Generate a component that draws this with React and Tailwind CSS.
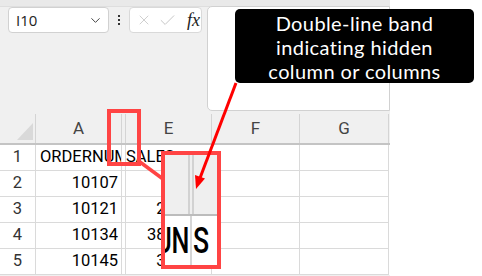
import React from 'react';
import { X, Check, ChevronDown } from 'lucide-react';

const cellFont = { fontFamily: 'Roboto, "Liberation Sans", sans-serif' };

const rows = [
  { n: 1, a: 'ORDERNUMBER', e: 'SALES', head: true },
  { n: 2, a: '10107', e: '2871' },
  { n: 3, a: '10121', e: '2765.9' },
  { n: 4, a: '10134', e: '3884.34' },
  { n: 5, a: '10145', e: '3746.7' },
];

const NameBox = () => (
  <div className="flex h-[26px] w-[101px] items-center justify-between rounded-[4px] border border-[#d1d1d1] bg-white pl-[7px] pr-[5px]">
    <span className="text-[15px] text-[#222]" style={{ fontFamily: '"Open Sans", sans-serif' }}>I10</span>
    <ChevronDown size={15} strokeWidth={1.6} className="text-[#444]" />
  </div>
);

const FormulaButtons = () => (
  <div className="flex h-[26px] w-[73px] items-center rounded-[4px] border border-[#d9d9d9] bg-white pl-[6px]">
    <X size={16} strokeWidth={1.2} className="text-[#c4c4c4]" />
    <Check size={19} strokeWidth={1.2} className="ml-[6px] text-[#c4c4c4]" />
    <span className="ml-[10px] text-[18px] italic text-[#222]" style={{ fontFamily: '"Liberation Serif", serif' }}>fx</span>
  </div>
);

const HeaderRow = () => (
  <div className="grid h-[31px] grid-cols-[36px_86px_4px_86px_88px_89px] border-b-2 border-[#c4c4c4] bg-[#f0f0f0] text-[17px] text-[#444]" style={cellFont}>
    <div className="relative border-r border-[#d4d4d4]">
      <svg className="absolute left-[17px] top-[9px]" width="16" height="17" viewBox="0 0 16 17">
        <polygon points="16,0 16,17 0,17" fill="#d9d9d9" />
      </svg>
    </div>
    <div className="flex items-center justify-center border-r border-[#d4d4d4]">A</div>
    <div className="border-r border-[#d4d4d4]" />
    <div className="flex items-center justify-center border-r border-[#d4d4d4]">E</div>
    <div className="flex items-center justify-center border-r border-[#d4d4d4]">F</div>
    <div className="flex items-center justify-center border-r border-[#d4d4d4]">G</div>
  </div>
);

const DataRow = ({ row }) => (
  <div className="grid h-[26px] grid-cols-[36px_86px_4px_86px_88px_89px] bg-white text-[16.5px] text-black" style={cellFont}>
    <div className="flex items-center justify-center border-b border-r border-[#dadada] text-[#333]">{row.n}</div>
    <div className={`flex items-center overflow-hidden whitespace-nowrap border-b border-r border-[#dadada] ${row.head ? 'justify-start pl-[4px]' : 'justify-end pr-[3px]'}`}>
      {row.a}
    </div>
    <div className="border-b border-r border-[#dadada]" />
    <div className={`flex items-center overflow-hidden whitespace-nowrap border-b border-r border-[#dadada] ${row.head ? 'justify-start pl-0' : 'justify-end pr-[4px]'}`}>
      {row.e}
    </div>
    <div className="border-b border-r border-[#dadada]" />
    <div className="border-b border-r border-[#dadada]" />
  </div>
);

// magnified view of the hidden-column band
const Inset = () => (
  <div className="absolute left-[165px] top-[155px] flex h-[110px] w-[52px] flex-col overflow-hidden bg-white">
    <div className="relative h-[61px] border-b-2 border-[#bcbcbc] bg-[#efefef]">
      <div className="absolute left-[23px] top-0 h-full w-[2px] bg-[#d2d2d2]" />
      <div className="absolute left-[27px] top-0 h-full w-[2px] bg-[#d2d2d2]" />
    </div>
    <div className="relative flex-1">
      <div className="absolute left-[25px] top-0 h-full w-[2px] bg-[#d6d6d6]" />
      <div className="absolute left-0 top-[2px] h-[46px] w-[24px] overflow-hidden">
        <span className="absolute right-0 top-0 origin-right scale-x-[0.68] whitespace-nowrap text-[37px] font-medium leading-[46px] text-black" style={cellFont}>
          UN
        </span>
      </div>
      <span className="absolute left-[28px] top-[2px] origin-left scale-x-[0.72] text-[37px] font-medium leading-[46px] text-black" style={cellFont}>
        S
      </span>
    </div>
  </div>
);

const Annotations = () => (
  <svg className="pointer-events-none absolute left-0 top-0" width="482" height="276" viewBox="0 0 482 276">
    <rect x="109" y="111" width="30" height="53" fill="none" stroke="#ff4444" strokeWidth="4" />
    <line x1="140" y1="162" x2="163" y2="179" stroke="#ff4444" strokeWidth="3.5" />
    <rect x="163" y="153" width="56" height="114" fill="none" stroke="#ff4444" strokeWidth="4" />
    <line x1="236" y1="83" x2="200" y2="178" stroke="#ff0000" strokeWidth="3" />
    <polygon points="196,189 205,178.5 195,175" fill="#ff0000" />
  </svg>
);

export default function App() {
  return (
    <div className="relative flex h-[276px] w-[482px] overflow-hidden bg-white">
      <div className="flex w-[390px] flex-col bg-[#f0f0f0]">
        <div className="h-[7px] border-b border-[#dedede] bg-[#e9e9e9]" />
        <div className="flex h-[107px] items-start pl-[8px]">
          <NameBox />
          <div className="ml-[9px] mt-[8px] flex flex-col gap-[2px]">
            <span className="h-[2px] w-[2px] bg-[#333]" />
            <span className="h-[2px] w-[2px] bg-[#333]" />
            <span className="h-[2px] w-[2px] bg-[#333]" />
          </div>
          <div className="ml-[9px]">
            <FormulaButtons />
          </div>
          <div className="ml-[5px] h-[105px] flex-1 -translate-y-[1px] rounded-l-[5px] border border-[#d1d1d1] bg-white" />
        </div>
        <HeaderRow />
        {rows.map((r) => (
          <DataRow key={r.n} row={r} />
        ))}
      </div>
      <div className="flex-1 bg-white" />

      <div
        className="absolute left-[235px] top-[9px] flex h-[74px] w-[239px] flex-col items-center justify-center rounded-[5px] bg-black pt-[2px] text-[20px] leading-[24px] tracking-[0.4px] text-white"
        style={{ fontFamily: 'Lato, "Open Sans", sans-serif' }}
      >
        <span>Double-line band</span>
        <span>indicating hidden</span>
        <span>column or columns</span>
      </div>

      <Inset />
      <Annotations />
    </div>
  );
}
